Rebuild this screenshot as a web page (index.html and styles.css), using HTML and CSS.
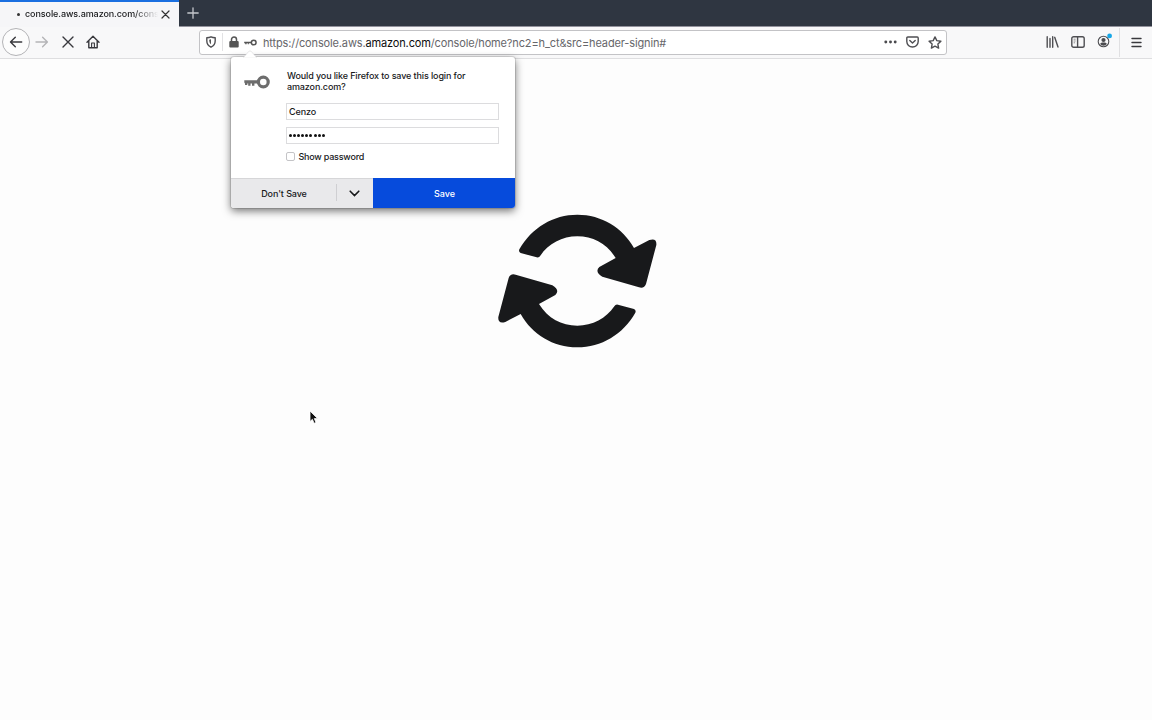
FILE: index.html
```html
<!DOCTYPE html>
<html lang="en">
<head>
<meta charset="utf-8">
<title>console.aws.amazon.com</title>
<link rel="stylesheet" href="styles.css">
</head>
<body>
<div class="browser">
  <div class="tabbar">
    <div class="tab">
      <span class="tab-dot"></span>
      <span class="tab-title">console.aws.amazon.com/conso</span>
      <svg class="tab-close" width="9" height="9" viewBox="0 0 9 9"><path d="M1 1l7 7M8 1l-7 7" stroke="#333" stroke-width="1.2" fill="none" stroke-linecap="round"/></svg>
    </div>
    <svg class="new-tab" width="12" height="12" viewBox="0 0 12 12"><path d="M6 .8v10.400M.8 6h10.400" stroke="#c4c7cc" stroke-width="1.300" fill="none" stroke-linecap="round"/></svg>
  </div>
  <div class="toolbar">
    <div class="nav">
      <div class="back"><svg width="14" height="12" viewBox="0 0 14 12"><path d="M12.700 6H1.600M6.300 1.200L1.500 6l4.800 4.800" class="line dark"/></svg></div>
      <svg class="forward" width="14" height="12" viewBox="0 0 14 12"><path d="M1 6h11.300M7.600 1.200L12.400 6l-4.800 4.800" class="line pale"/></svg>
      <svg class="stop" width="12" height="12" viewBox="0 0 12 12"><path d="M1 1l10 10M11 1L1 11" class="line dark"/></svg>
      <svg class="home" width="14" height="14" viewBox="0 0 14 14"><path d="M1 7.200L7 1.300l6 5.900M2.800 6v6.700h8.400V6" class="line dark"/><path d="M5.600 12.500V8h2.800v4.500" class="line dark thin"/></svg>
    </div>
    <div class="urlbar">
      <svg class="shield" width="10" height="12" viewBox="0 0 10 12"><path d="M5 .8C3.600 1.500 2.200 1.700.8 1.800v3C.8 8 2.200 10 5 11.200 7.800 10 9.200 8 9.200 4.800v-3C7.800 1.700 6.400 1.500 5 .8z" class="line grey"/><path d="M5 3.300v4.900C3.700 7.200 3.200 6 3.200 3.700z" fill="#555"/></svg>
      <span class="divider"></span>
      <svg class="lock" width="10" height="12" viewBox="0 0 10 12"><path d="M2.500 5.500V3.500a2.500 2.500 0 0 1 5 0v2" stroke="#555" stroke-width="1.500" fill="none"/><rect x=".3" y="5" width="9.400" height="6.500" rx="1" fill="#555"/></svg>
      <svg class="minikey" width="13" height="7" viewBox="0 0 13 7"><circle cx="9.700" cy="3.500" r="2.350" fill="none" stroke="#555" stroke-width="1.500"/><path d="M7.400 2.700v1.600H4.800V5.300H3.800V4.300H2.600V5.300H1.200V4.300H.2V2.700z" fill="#555"/></svg>
      <span class="url">https://console.aws.<b>amazon.com</b>/console/home?nc2=h_ct&amp;src=header-signin#</span>
      <div class="url-actions">
        <svg width="13" height="4" viewBox="0 0 13 4"><g fill="#4a4a4e"><circle cx="1.800" cy="2" r="1.450"/><circle cx="6.500" cy="2" r="1.450"/><circle cx="11.200" cy="2" r="1.450"/></g></svg>
        <svg width="13" height="12" viewBox="0 0 13 12"><path d="M1.800 1h9.400q1 0 1 1v3.500a5.700 5.500 0 0 1-11.400 0V2q0-1 1-1z" class="line grey"/><path d="M3.800 4.500l2.700 2.600 2.700-2.600" class="line grey"/></svg>
        <svg width="14" height="13" viewBox="0 0 14 13"><path d="M7 .9l1.800 3.700 4.100.6-3 2.900.7 4L7 10.200l-3.600 1.900.7-4-3-2.900 4.100-.6z" class="line grey"/></svg>
      </div>
    </div>
    <div class="tools">
      <svg width="13" height="12" viewBox="0 0 13 12"><path d="M1.200.8v10.400M4 2.500v8.700M6.700.8v10.400M8.700 1.300l3.300 9.700" class="line grey"/></svg>
      <svg width="14" height="12" viewBox="0 0 14 12"><rect x=".8" y=".8" width="12.400" height="10.400" rx="1.800" class="line grey"/><path d="M6.600 1v10" class="line grey"/><path d="M2.600 3.200h2M2.600 5h2M2.600 6.800h1.500" stroke="#777" stroke-width=".8"/></svg>
      <svg class="account" width="15" height="15" viewBox="0 0 15 15"><circle cx="6.500" cy="8.500" r="5.300" class="line grey thin"/><circle cx="6.500" cy="7" r="2.100" fill="#4a4a4e"/><path d="M3.100 11q.5-1.500 2-1.500h2.800q1.500 0 2 1.500-1.400 1.700-3.400 1.700T3.100 11z" fill="#4a4a4e"/><circle cx="12.600" cy="2.900" r="2.400" fill="#16a7e8"/></svg>
      <span class="tool-divider"></span>
      <svg class="menu" width="11" height="11" viewBox="0 0 11 11"><path d="M1 1.500h9M1 5.500h9M1 9.500h9" class="line dark"/></svg>
    </div>
  </div>
  <main class="page">
    <svg class="loader" width="185" height="155" viewBox="0 0 555 465"><defs><path id="arrow" d="M103 133C140 68 205 29 277 29C350 29 413 68 447 129L493 105Q516 98 514 120L483 237Q478 251 462 247L352 215Q328 200 343 186L392 159C365 116 325 94 277 94C232 94 190 116 166 152Q162 159 155 157L107 144Q100 140 103 133Z"/></defs><g fill="#18191b"><use href="#arrow"/><use href="#arrow" transform="rotate(180 277 228)"/></g></svg>
  </main>
</div>

<div class="popup">
  <svg class="popup-tip" width="14" height="8" viewBox="0 0 14 8"><path d="M0 8L5.700 1.500Q7 .2 8.300 1.500L14 8z" fill="#fff" stroke="#d0d0d2" stroke-width=".5"/><path d="M0 7.500h14V8H0z" fill="#fff"/></svg>
  <div class="popup-body">
    <svg class="bigkey" width="26" height="14" viewBox="0 0 26 14"><circle cx="19.300" cy="7" r="4.900" fill="none" stroke="#6d6d6d" stroke-width="3.200"/><path d="M14.500 5.200V8.600H10.400V10.800H8V8.600H6.500V10.800H4.200V8.600H3.300V10H1V8.600L.3 7.500V5.200z" fill="#6d6d6d"/></svg>
    <div class="form">
      <p class="question">Would you like Firefox to save this login for<br>amazon.com?</p>
      <div class="field">Cenzo</div>
      <div class="field dots"><i></i><i></i><i></i><i></i><i></i><i></i><i></i><i></i><i></i></div>
      <div class="check"><span class="box"></span><span class="check-label">Show password</span></div>
    </div>
  </div>
  <div class="buttons">
    <div class="dont">Don't Save</div>
    <div class="drop"><svg width="11" height="7" viewBox="0 0 11 7"><path d="M1.200 1.200l4.300 4.300 4.300-4.300" fill="none" stroke="#18191b" stroke-width="1.600" stroke-linecap="round"/></svg></div>
    <div class="save">Save</div>
  </div>
</div>
<svg class="cursor" width="10" height="15" viewBox="0 0 10 15"><path d="M1 1v10.500l2.400-2.200 1.700 4 1.900-.8-1.700-3.900h3.300z" fill="#111" stroke="#fff" stroke-width=".8"/></svg>
</body>
</html>
```
FILE: styles.css
```css
* { box-sizing: border-box; }
body {
  margin: 0;
  width: 1152px;
  height: 720px;
  overflow: hidden;
  background: #fdfdfd;
  font-family: Inter, "Liberation Sans", sans-serif;
  color: #18191b;
}
svg { display: block; flex: none; }
.line { fill: none; stroke-width: 1.4; stroke-linecap: round; stroke-linejoin: round; }
.thin { stroke-width: 1.1; }
.dark { stroke: #38383d; }
.grey { stroke: #4f4f53; }
.pale { stroke: #b4b4b7; }
.browser { display: flex; flex-direction: column; height: 720px; }

.tabbar { display: flex; height: 27px; background: #2f3641; border-bottom: 1px solid #92929c; }
.tab {
  display: flex;
  align-items: center;
  width: 179px;
  height: 27px;
  padding: 0 8px 1px 17px;
  background: #f6f6f8;
  border-top: 2px solid #1a6fe0;
}
.tab-dot { width: 3px; height: 3px; border-radius: 50%; background: #333; }
.tab-title {
  width: 136px;
  margin-left: 5px;
  white-space: nowrap;
  font-size: 9px;
  font-weight: 500;
  line-height: 14px;
  letter-spacing: -0.09px;
  -webkit-mask-image: linear-gradient(90deg, #000 108px, transparent 133px);
  mask-image: linear-gradient(90deg, #000 108px, transparent 133px);
}
.tab-close { flex: none; }
.new-tab { margin: 7px 0 0 8px; }

.toolbar {
  display: flex;
  align-items: center;
  height: 32px;
  padding-bottom: 1px;
  background: #f8f8f9;
  border-bottom: 1px solid #dedee0;
}
.nav { display: flex; align-items: center; width: 199px; padding-left: 2px; }
.back {
  display: flex;
  align-items: center;
  justify-content: center;
  width: 28px;
  height: 28px;
  border: 1px solid #b3b3b6;
  border-radius: 50%;
  background: #fcfcfc;
}
.forward { margin-left: 5px; }
.stop { margin-left: 13px; }
.home { margin-left: 12px; }
.urlbar {
  display: flex;
  align-items: center;
  width: 748px;
  height: 25px;
  padding: 0 4px 0 6px;
  border: 1px solid #c3c3c6;
  border-radius: 3px;
  background: #fff;
}
.divider { width: 1px; height: 18px; margin: 0 6px; background: #e2e2e4; }
.minikey { margin-left: 5px; }
.url { margin-left: 6px; padding-top: 2px; font-size: 11px; line-height: 16px; color: #66666a; white-space: nowrap; letter-spacing: -0.14px; }
.url b { color: #0c0c0d; font-weight: 400; }
.url-actions { display: flex; align-items: center; gap: 9px; margin-left: auto; }
.tools { display: flex; align-items: center; flex: 1; padding-left: 99px; }
.tools svg + svg { margin-left: 12px; }
.tools .account { margin: -3px 0 0 12px; }
.tool-divider { width: 1px; height: 29px; margin: 0 11px 0 7px; background: #e0e0e2; }

.page { flex: 1; padding: 146px 0 0 485px; background: #fdfdfd; }

.popup {
  position: absolute;
  left: 231px;
  top: 57px;
  width: 284px;
  height: 151px;
  display: flex;
  flex-direction: column;
  border-radius: 3px;
  background: #fff;
  box-shadow: 0 0 0 1px rgba(0, 0, 0, .1), 0 3px 8px rgba(0, 0, 0, .55);
  font-size: 9px;
  font-weight: 500;
}
.popup-tip { position: absolute; left: 12px; top: -7px; }
.popup-body { display: flex; flex: 1; padding: 13px 16px 0 13px; }
.bigkey { margin-top: 5px; }
.form { width: 213px; margin-left: 16px; }
.question { margin: 0 0 11px 1px; line-height: 11px; white-space: nowrap; letter-spacing: -0.12px; }
.field {
  height: 17px;
  margin-bottom: 7px;
  padding: 0 2px;
  border: 1px solid #dcdcde;
  line-height: 15px;
  letter-spacing: -0.1px;
  background: #fff;
}
.dots { display: flex; align-items: center; gap: 1.1px; margin-bottom: 0; }
.dots i { width: 3px; height: 3px; border-radius: 50%; background: #111; }
.check { display: flex; align-items: center; height: 11px; margin-top: 7px; }
.box { width: 9px; height: 9px; border: 1px solid #c4c4c7; border-radius: 2px; background: #fff; }
.check-label { margin-left: 3.5px; line-height: 11px; letter-spacing: -0.22px; }
.buttons { display: flex; height: 30px; border-radius: 0 0 3px 3px; overflow: hidden; line-height: 31px; text-align: center; }
.dont { width: 105px; padding-left: 1px; background: #e9e9eb; border-top: 1px solid #d6d6d8; line-height: 29px; letter-spacing: -0.1px; }
.drop { display: flex; align-items: center; justify-content: center; width: 37px; background: linear-gradient(#cfcfd2, #cfcfd2) 0 5px / 1px 17px no-repeat #e9e9eb; border-top: 1px solid #d6d6d8; }
.save { flex: 1; padding-left: 1px; background: #064bdc; color: #fff; }
.cursor { position: absolute; left: 309px; top: 410px; }
```
